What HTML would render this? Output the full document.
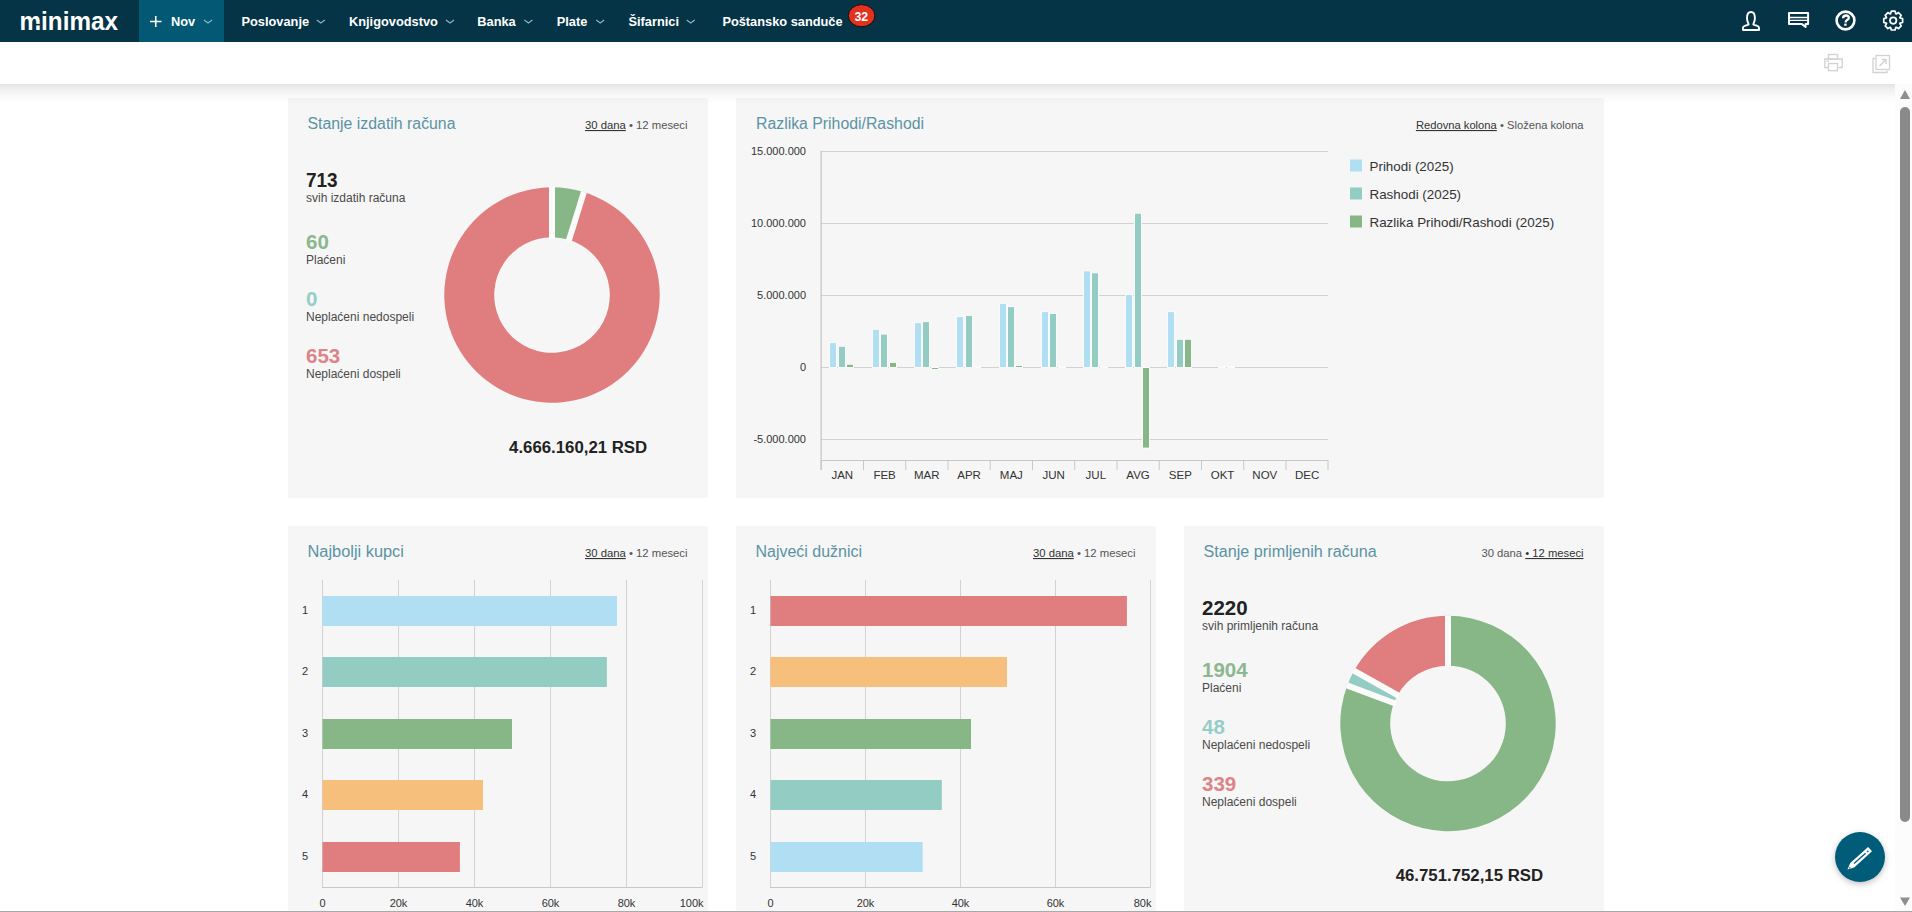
<!DOCTYPE html>
<html><head><meta charset="utf-8"><style>
html,body{margin:0;padding:0;width:1912px;height:912px;overflow:hidden;background:#fff;font-family:"Liberation Sans", sans-serif;}
.abs{position:absolute;}
svg text{font-family:"Liberation Sans", sans-serif;}
</style></head><body>

<div class="abs" style="left:0;top:0;width:1912px;height:42px;background:#053447"></div>
<div class="abs" style="left:139px;top:0;width:85px;height:42px;background:#035874"></div>
<div class="abs" style="left:0;top:42px;width:1912px;height:42px;background:#fff"></div>
<svg class="abs" style="left:0;top:0" width="1912" height="912" viewBox="0 0 1912 912">
<text x="19.5" y="30" font-size="25" fill="#ffffff" font-weight="bold" text-anchor="start" textLength="98.5" lengthAdjust="spacingAndGlyphs">minimax</text>
<rect x="34.5" y="23.9" width="5.5" height="1.5" fill="#053447"/>
<path d="M150 21.5 H161.5 M155.75 16 V27" stroke="#fff" stroke-width="1.6"/>
<text x="171" y="26" font-size="12.8" fill="#fff" font-weight="bold" text-anchor="start" >Nov</text>
<path d="M204 20 L208 23 L212 20" stroke="#8fb3c3" stroke-width="1.2" fill="none"/>
<text x="241.5" y="26" font-size="12.8" fill="#fff" font-weight="bold" text-anchor="start" >Poslovanje</text>
<path d="M316.8 20 L320.8 23 L324.8 20" stroke="#8fb3c3" stroke-width="1.2" fill="none"/>
<text x="349" y="26" font-size="12.8" fill="#fff" font-weight="bold" text-anchor="start" >Knjigovodstvo</text>
<path d="M446 20 L450 23 L454 20" stroke="#8fb3c3" stroke-width="1.2" fill="none"/>
<text x="477.3" y="26" font-size="12.8" fill="#fff" font-weight="bold" text-anchor="start" >Banka</text>
<path d="M524.4 20 L528.4 23 L532.4 20" stroke="#8fb3c3" stroke-width="1.2" fill="none"/>
<text x="556.7" y="26" font-size="12.8" fill="#fff" font-weight="bold" text-anchor="start" >Plate</text>
<path d="M596.2 20 L600.2 23 L604.2 20" stroke="#8fb3c3" stroke-width="1.2" fill="none"/>
<text x="628.5" y="26" font-size="12.8" fill="#fff" font-weight="bold" text-anchor="start" >Šifarnici</text>
<path d="M686.7 20 L690.7 23 L694.7 20" stroke="#8fb3c3" stroke-width="1.2" fill="none"/>
<text x="722.4" y="26" font-size="12.8" fill="#fff" font-weight="bold" text-anchor="start" >Poštansko sanduče</text>
<ellipse cx="861.6" cy="15.7" rx="13.3" ry="11.1" fill="#e0321f" stroke="#140c0c" stroke-width="1"/>
<text x="861.3" y="20.6" font-size="12.3" fill="#fff" font-weight="bold" text-anchor="middle" >32</text>
<path d="M1748.6 24.6 C1748.6 23.2 1747 21.6 1747 18.2 C1747 14.4 1748.6 12 1751 12 C1753.4 12 1754.9 14.4 1754.9 18.2 C1754.9 21.6 1753.3 23.2 1753.3 24.6 L1756.6 25.6 C1758.3 26.1 1759 26.9 1759 27.8 V30 H1743 V27.8 C1743 26.9 1743.7 26.1 1745.4 25.6 Z" fill="none" stroke="#fff" stroke-width="1.9" stroke-linejoin="round"/>
<path d="M1789 12.9 H1808.1 V23.9 H1805.6 L1805.6 27 L1801.6 23.9 H1789 Z" fill="none" stroke="#fff" stroke-width="2" stroke-linejoin="round"/>
<path d="M1789.5 17.5 H1807.5 M1789.5 20.4 H1807.5" stroke="#fff" stroke-width="1.4"/>
<circle cx="1845.5" cy="20.5" r="8.9" fill="none" stroke="#fff" stroke-width="2.6"/>
<path d="M1843.1 18.2 C1843.1 16.3 1844.3 15.5 1846 15.5 C1847.8 15.5 1848.8 16.5 1848.8 17.9 C1848.8 19.8 1845.6 19.9 1845.6 22.4" fill="none" stroke="#fff" stroke-width="2.3"/>
<rect x="1844.2" y="23.6" width="2.4" height="2.2" fill="#fff"/>
<path d="M1890.63 13.77 L1891.29 11.19 L1895.11 11.19 L1895.77 13.77 L1896.21 13.95 L1898.50 12.60 L1901.20 15.30 L1899.85 17.59 L1900.03 18.03 L1902.61 18.69 L1902.61 22.51 L1900.03 23.17 L1899.85 23.61 L1901.20 25.90 L1898.50 28.60 L1896.21 27.25 L1895.77 27.43 L1895.11 30.01 L1891.29 30.01 L1890.63 27.43 L1890.19 27.25 L1887.90 28.60 L1885.20 25.90 L1886.55 23.61 L1886.37 23.17 L1883.79 22.51 L1883.79 18.69 L1886.37 18.03 L1886.55 17.59 L1885.20 15.30 L1887.90 12.60 L1890.19 13.95 Z" fill="none" stroke="#fff" stroke-width="1.7" stroke-linejoin="round"/>
<circle cx="1893.2" cy="20.6" r="3.2" fill="none" stroke="#fff" stroke-width="1.8"/>
<g fill="none" stroke="#d2d2d2" stroke-width="1.3"><rect x="1828.5" y="54.5" width="9" height="4.5"/><path d="M1828.5 67.5 H1824.8 V59 H1842.2 V67.5 H1838.5"/><rect x="1828.5" y="63.5" width="9" height="7.2"/><path d="M1826.5 61.2 H1829"/></g>
<g fill="none" stroke="#d2d2d2" stroke-width="1.3"><path d="M1875 58.5 H1873 V72.5 H1887 V70.5"/><rect x="1876" y="55.5" width="13.5" height="14"/><path d="M1879.5 66 L1886 59.5 M1881.5 59.5 H1886 V64"/></g>
<rect x="288" y="98" width="420" height="400" fill="#f6f6f6"/>
<rect x="736" y="98" width="868" height="400" fill="#f6f6f6"/>
<rect x="288" y="526" width="420" height="400" fill="#f6f6f6"/>
<rect x="736" y="526" width="420" height="400" fill="#f6f6f6"/>
<rect x="1184" y="526" width="420" height="400" fill="#f6f6f6"/>
<text x="307.5" y="128.6" font-size="15.8" fill="#5a93a4" font-weight="normal" text-anchor="start" textLength="148" lengthAdjust="spacingAndGlyphs">Stanje izdatih računa</text>
<text x="585" y="129" font-size="11" fill="#333" font-weight="normal" text-anchor="start" textLength="102.5" lengthAdjust="spacingAndGlyphs"><tspan text-decoration="underline">30 dana</tspan> <tspan fill="#555">• 12 meseci</tspan></text>
<text x="306" y="186.8" font-size="20.5" fill="#222222" font-weight="bold" text-anchor="start" textLength="31.6" lengthAdjust="spacingAndGlyphs">713</text>
<text x="306" y="201.9" font-size="12" fill="#4a4a4a" font-weight="normal" text-anchor="start" >svih izdatih računa</text>
<text x="306" y="248.60000000000002" font-size="20.5" fill="#8cb790" font-weight="bold" text-anchor="start" >60</text>
<text x="306" y="263.7" font-size="12" fill="#4a4a4a" font-weight="normal" text-anchor="start" >Plaćeni</text>
<text x="306" y="305.5" font-size="20.5" fill="#96cdc6" font-weight="bold" text-anchor="start" >0</text>
<text x="306" y="320.59999999999997" font-size="12" fill="#4a4a4a" font-weight="normal" text-anchor="start" >Neplaćeni nedospeli</text>
<text x="306" y="362.7" font-size="20.5" fill="#dc8488" font-weight="bold" text-anchor="start" >653</text>
<text x="306" y="377.79999999999995" font-size="12" fill="#4a4a4a" font-weight="normal" text-anchor="start" >Neplaćeni dospeli</text>
<path d="M552.00 187.30 A107.7 107.7 0 0 1 583.85 192.12 L569.09 239.78 A57.8 57.8 0 0 0 552.00 237.20 Z" fill="#87b787"/>
<path d="M583.85 192.12 A107.7 107.7 0 1 1 552.00 187.30 L552.00 237.20 A57.8 57.8 0 1 0 569.09 239.78 Z" fill="#e07d7f"/>
<line x1="552.00" y1="239.20" x2="552.00" y2="187.00" stroke="#fbfbfb" stroke-width="6"/>
<line x1="568.50" y1="241.70" x2="583.94" y2="191.83" stroke="#fbfbfb" stroke-width="6"/>
<text x="647.2" y="453.2" font-size="16.8" fill="#222" font-weight="bold" text-anchor="end" >4.666.160,21 RSD</text>
<text x="1203.5" y="556.6" font-size="15.8" fill="#5a93a4" font-weight="normal" text-anchor="start" textLength="173.2" lengthAdjust="spacingAndGlyphs">Stanje primljenih računa</text>
<text x="1583.5" y="557" font-size="11" fill="#333" font-weight="normal" text-anchor="end" textLength="102" lengthAdjust="spacingAndGlyphs"><tspan fill="#555">30 dana </tspan><tspan text-decoration="underline">• 12 meseci</tspan></text>
<text x="1202" y="614.8" font-size="20.5" fill="#222222" font-weight="bold" text-anchor="start" >2220</text>
<text x="1202" y="629.9" font-size="12" fill="#4a4a4a" font-weight="normal" text-anchor="start" >svih primljenih računa</text>
<text x="1202" y="676.5999999999999" font-size="20.5" fill="#8cb790" font-weight="bold" text-anchor="start" >1904</text>
<text x="1202" y="691.6999999999999" font-size="12" fill="#4a4a4a" font-weight="normal" text-anchor="start" >Plaćeni</text>
<text x="1202" y="733.5" font-size="20.5" fill="#96cdc6" font-weight="bold" text-anchor="start" >48</text>
<text x="1202" y="748.6" font-size="12" fill="#4a4a4a" font-weight="normal" text-anchor="start" >Neplaćeni nedospeli</text>
<text x="1202" y="790.6999999999999" font-size="20.5" fill="#dc8488" font-weight="bold" text-anchor="start" >339</text>
<text x="1202" y="805.8" font-size="12" fill="#4a4a4a" font-weight="normal" text-anchor="start" >Neplaćeni dospeli</text>
<path d="M1448.00 615.80 A107.7 107.7 0 1 1 1347.25 685.43 L1393.93 703.07 A57.8 57.8 0 1 0 1448.00 665.70 Z" fill="#87b787"/>
<path d="M1347.25 685.43 A107.7 107.7 0 0 1 1354.08 670.79 L1397.59 695.21 A57.8 57.8 0 0 0 1393.93 703.07 Z" fill="#93ccc3"/>
<path d="M1354.08 670.79 A107.7 107.7 0 0 1 1448.00 615.80 L1448.00 665.70 A57.8 57.8 0 0 0 1397.59 695.21 Z" fill="#e07d7f"/>
<line x1="1448.00" y1="667.70" x2="1448.00" y2="615.50" stroke="#fbfbfb" stroke-width="6"/>
<line x1="1395.80" y1="703.78" x2="1346.97" y2="685.32" stroke="#fbfbfb" stroke-width="6"/>
<line x1="1399.34" y1="696.19" x2="1353.82" y2="670.65" stroke="#fbfbfb" stroke-width="6"/>
<text x="1543.1" y="880.8" font-size="16.8" fill="#222" font-weight="bold" text-anchor="end" >46.751.752,15 RSD</text>
<text x="756" y="128.6" font-size="15.8" fill="#5a93a4" font-weight="normal" text-anchor="start" textLength="168" lengthAdjust="spacingAndGlyphs">Razlika Prihodi/Rashodi</text>
<text x="1583.5" y="129" font-size="11" fill="#333" font-weight="normal" text-anchor="end" textLength="167.6" lengthAdjust="spacingAndGlyphs"><tspan text-decoration="underline">Redovna kolona</tspan> <tspan fill="#555">• Složena kolona</tspan></text>
<rect x="821" y="151.0" width="507" height="1" fill="#d2d2d2"/>
<text x="806" y="155.3" font-size="11" fill="#333" font-weight="normal" text-anchor="end" >15.000.000</text>
<rect x="821" y="223.0" width="507" height="1" fill="#d2d2d2"/>
<text x="806" y="227.3" font-size="11" fill="#333" font-weight="normal" text-anchor="end" >10.000.000</text>
<rect x="821" y="295.0" width="507" height="1" fill="#d2d2d2"/>
<text x="806" y="299.3" font-size="11" fill="#333" font-weight="normal" text-anchor="end" >5.000.000</text>
<rect x="821" y="367" width="507" height="1" fill="#d2d2d2"/>
<text x="806" y="371.3" font-size="11" fill="#333" font-weight="normal" text-anchor="end" >0</text>
<rect x="821" y="439.0" width="507" height="1" fill="#d2d2d2"/>
<text x="806" y="443.3" font-size="11" fill="#333" font-weight="normal" text-anchor="end" >-5.000.000</text>
<rect x="820.5" y="151" width="1.3" height="319" fill="#c8c8c8"/>
<rect x="821" y="460" width="507" height="1" fill="#c8c8c8"/>
<rect x="820.7" y="460" width="1" height="10" fill="#c8c8c8"/>
<text x="842.325" y="479.4" font-size="11.5" fill="#333" font-weight="normal" text-anchor="middle" >JAN</text>
<rect x="863.0" y="460" width="1" height="10" fill="#c8c8c8"/>
<text x="884.575" y="479.4" font-size="11.5" fill="#333" font-weight="normal" text-anchor="middle" >FEB</text>
<rect x="905.2" y="460" width="1" height="10" fill="#c8c8c8"/>
<text x="926.825" y="479.4" font-size="11.5" fill="#333" font-weight="normal" text-anchor="middle" >MAR</text>
<rect x="947.5" y="460" width="1" height="10" fill="#c8c8c8"/>
<text x="969.075" y="479.4" font-size="11.5" fill="#333" font-weight="normal" text-anchor="middle" >APR</text>
<rect x="989.7" y="460" width="1" height="10" fill="#c8c8c8"/>
<text x="1011.325" y="479.4" font-size="11.5" fill="#333" font-weight="normal" text-anchor="middle" >MAJ</text>
<rect x="1032.0" y="460" width="1" height="10" fill="#c8c8c8"/>
<text x="1053.575" y="479.4" font-size="11.5" fill="#333" font-weight="normal" text-anchor="middle" >JUN</text>
<rect x="1074.2" y="460" width="1" height="10" fill="#c8c8c8"/>
<text x="1095.825" y="479.4" font-size="11.5" fill="#333" font-weight="normal" text-anchor="middle" >JUL</text>
<rect x="1116.5" y="460" width="1" height="10" fill="#c8c8c8"/>
<text x="1138.075" y="479.4" font-size="11.5" fill="#333" font-weight="normal" text-anchor="middle" >AVG</text>
<rect x="1158.7" y="460" width="1" height="10" fill="#c8c8c8"/>
<text x="1180.325" y="479.4" font-size="11.5" fill="#333" font-weight="normal" text-anchor="middle" >SEP</text>
<rect x="1201.0" y="460" width="1" height="10" fill="#c8c8c8"/>
<text x="1222.575" y="479.4" font-size="11.5" fill="#333" font-weight="normal" text-anchor="middle" >OKT</text>
<rect x="1243.2" y="460" width="1" height="10" fill="#c8c8c8"/>
<text x="1264.825" y="479.4" font-size="11.5" fill="#333" font-weight="normal" text-anchor="middle" >NOV</text>
<rect x="1285.5" y="460" width="1" height="10" fill="#c8c8c8"/>
<text x="1307.075" y="479.4" font-size="11.5" fill="#333" font-weight="normal" text-anchor="middle" >DEC</text>
<rect x="1327.5" y="460" width="1" height="10" fill="#c8c8c8"/>
<rect x="829" y="342.1" width="8" height="25.9" fill="#fafafa"/>
<rect x="830" y="343.1" width="6" height="23.9" fill="#b0dff4"/>
<rect x="838" y="345.8" width="8" height="22.2" fill="#fafafa"/>
<rect x="839" y="346.8" width="6" height="20.2" fill="#93ccc3"/>
<rect x="846" y="363.8" width="8" height="4.2" fill="#fafafa"/>
<rect x="847" y="364.8" width="6" height="2.2" fill="#87b787"/>
<rect x="872" y="328.8" width="8" height="39.2" fill="#fafafa"/>
<rect x="873" y="329.8" width="6" height="37.2" fill="#b0dff4"/>
<rect x="880" y="333.6" width="8" height="34.4" fill="#fafafa"/>
<rect x="881" y="334.6" width="6" height="32.4" fill="#93ccc3"/>
<rect x="889" y="361.9" width="8" height="6.1" fill="#fafafa"/>
<rect x="890" y="362.9" width="6" height="4.1" fill="#87b787"/>
<rect x="914" y="322.1" width="8" height="45.9" fill="#fafafa"/>
<rect x="915" y="323.1" width="6" height="43.9" fill="#b0dff4"/>
<rect x="922" y="321.1" width="8" height="46.9" fill="#fafafa"/>
<rect x="923" y="322.1" width="6" height="44.9" fill="#93ccc3"/>
<rect x="931" y="367" width="8" height="3.0" fill="#fafafa"/>
<rect x="932" y="368" width="6" height="1.0" fill="#87b787"/>
<rect x="956" y="316.1" width="8" height="51.9" fill="#fafafa"/>
<rect x="957" y="317.1" width="6" height="49.9" fill="#b0dff4"/>
<rect x="965" y="314.9" width="8" height="53.1" fill="#fafafa"/>
<rect x="966" y="315.9" width="6" height="51.1" fill="#93ccc3"/>
<rect x="973" y="366" width="8" height="2" fill="#fafafa"/>
<rect x="999" y="302.9" width="8" height="65.1" fill="#fafafa"/>
<rect x="1000" y="303.9" width="6" height="63.1" fill="#b0dff4"/>
<rect x="1007" y="306.1" width="8" height="61.9" fill="#fafafa"/>
<rect x="1008" y="307.1" width="6" height="59.9" fill="#93ccc3"/>
<rect x="1015" y="365.0" width="8" height="3.0" fill="#fafafa"/>
<rect x="1016" y="366.0" width="6" height="1.0" fill="#87b787"/>
<rect x="1041" y="311.1" width="8" height="56.9" fill="#fafafa"/>
<rect x="1042" y="312.1" width="6" height="54.9" fill="#b0dff4"/>
<rect x="1049" y="313.0" width="8" height="55.0" fill="#fafafa"/>
<rect x="1050" y="314.0" width="6" height="53.0" fill="#93ccc3"/>
<rect x="1058" y="366" width="8" height="2" fill="#fafafa"/>
<rect x="1083" y="270.3" width="8" height="97.7" fill="#fafafa"/>
<rect x="1084" y="271.3" width="6" height="95.7" fill="#b0dff4"/>
<rect x="1091" y="272.3" width="8" height="95.7" fill="#fafafa"/>
<rect x="1092" y="273.3" width="6" height="93.7" fill="#93ccc3"/>
<rect x="1100" y="366" width="8" height="2" fill="#fafafa"/>
<rect x="1125" y="294.0" width="8" height="74.0" fill="#fafafa"/>
<rect x="1126" y="295.0" width="6" height="72.0" fill="#b0dff4"/>
<rect x="1134" y="212.7" width="8" height="155.3" fill="#fafafa"/>
<rect x="1135" y="213.7" width="6" height="153.3" fill="#93ccc3"/>
<rect x="1142" y="367" width="8" height="81.6" fill="#fafafa"/>
<rect x="1143" y="368" width="6" height="79.6" fill="#87b787"/>
<rect x="1167" y="311.1" width="8" height="56.9" fill="#fafafa"/>
<rect x="1168" y="312.1" width="6" height="54.9" fill="#b0dff4"/>
<rect x="1176" y="338.8" width="8" height="29.2" fill="#fafafa"/>
<rect x="1177" y="339.8" width="6" height="27.2" fill="#93ccc3"/>
<rect x="1184" y="338.8" width="8" height="29.2" fill="#fafafa"/>
<rect x="1185" y="339.8" width="6" height="27.2" fill="#87b787"/>
<rect x="1218" y="366" width="8" height="2" fill="#fafafa"/>
<rect x="1227" y="366" width="8" height="2" fill="#fafafa"/>
<rect x="1350" y="159.5" width="12" height="12" fill="#b0dff4"/>
<text x="1369.5" y="170.8" font-size="13.4" fill="#333" font-weight="normal" text-anchor="start" >Prihodi (2025)</text>
<rect x="1350" y="187.5" width="12" height="12" fill="#93ccc3"/>
<text x="1369.5" y="198.8" font-size="13.4" fill="#333" font-weight="normal" text-anchor="start" >Rashodi (2025)</text>
<rect x="1350" y="215.5" width="12" height="12" fill="#87b787"/>
<text x="1369.5" y="226.8" font-size="13.4" fill="#333" font-weight="normal" text-anchor="start" >Razlika Prihodi/Rashodi (2025)</text>
<text x="307.5" y="556.6" font-size="15.8" fill="#5a93a4" font-weight="normal" text-anchor="start" textLength="96.4" lengthAdjust="spacingAndGlyphs">Najbolji kupci</text>
<text x="585" y="557" font-size="11" fill="#333" font-weight="normal" text-anchor="start" textLength="102.5" lengthAdjust="spacingAndGlyphs"><tspan text-decoration="underline">30 dana</tspan> <tspan fill="#555">• 12 meseci</tspan></text>
<rect x="322.0" y="580" width="1" height="307.4" fill="#d2d2d2"/>
<text x="322.5" y="907" font-size="11" fill="#333" font-weight="normal" text-anchor="middle" >0</text>
<rect x="398.0" y="580" width="1" height="307.4" fill="#d2d2d2"/>
<text x="398.5" y="907" font-size="11" fill="#333" font-weight="normal" text-anchor="middle" >20k</text>
<rect x="474.0" y="580" width="1" height="307.4" fill="#d2d2d2"/>
<text x="474.5" y="907" font-size="11" fill="#333" font-weight="normal" text-anchor="middle" >40k</text>
<rect x="550.0" y="580" width="1" height="307.4" fill="#d2d2d2"/>
<text x="550.5" y="907" font-size="11" fill="#333" font-weight="normal" text-anchor="middle" >60k</text>
<rect x="626.0" y="580" width="1" height="307.4" fill="#d2d2d2"/>
<text x="626.5" y="907" font-size="11" fill="#333" font-weight="normal" text-anchor="middle" >80k</text>
<rect x="702.0" y="580" width="1" height="307.4" fill="#d2d2d2"/>
<text x="703.5" y="907" font-size="11" fill="#333" font-weight="normal" text-anchor="end" >100k</text>
<rect x="322.0" y="887" width="380.5" height="1" fill="#c8c8c8"/>
<rect x="322.5" y="596.0" width="294.5" height="30" fill="#b0dff4"/>
<text x="305" y="614.2" font-size="11" fill="#333" font-weight="normal" text-anchor="middle" >1</text>
<rect x="322.5" y="657.0" width="284.4" height="30" fill="#93ccc3"/>
<text x="305" y="675.2" font-size="11" fill="#333" font-weight="normal" text-anchor="middle" >2</text>
<rect x="322.5" y="719.0" width="189.5" height="30" fill="#87b787"/>
<text x="305" y="737.2" font-size="11" fill="#333" font-weight="normal" text-anchor="middle" >3</text>
<rect x="322.5" y="780.0" width="160.5" height="30" fill="#f6c07c"/>
<text x="305" y="798.2" font-size="11" fill="#333" font-weight="normal" text-anchor="middle" >4</text>
<rect x="322.5" y="842.0" width="137.4" height="30" fill="#e07d7f"/>
<text x="305" y="860.2" font-size="11" fill="#333" font-weight="normal" text-anchor="middle" >5</text>
<text x="755.5" y="556.6" font-size="15.8" fill="#5a93a4" font-weight="normal" text-anchor="start" textLength="106.6" lengthAdjust="spacingAndGlyphs">Najveći dužnici</text>
<text x="1033" y="557" font-size="11" fill="#333" font-weight="normal" text-anchor="start" textLength="102.5" lengthAdjust="spacingAndGlyphs"><tspan text-decoration="underline">30 dana</tspan> <tspan fill="#555">• 12 meseci</tspan></text>
<rect x="770.0" y="580" width="1" height="307.4" fill="#d2d2d2"/>
<text x="770.5" y="907" font-size="11" fill="#333" font-weight="normal" text-anchor="middle" >0</text>
<rect x="865.0" y="580" width="1" height="307.4" fill="#d2d2d2"/>
<text x="865.5" y="907" font-size="11" fill="#333" font-weight="normal" text-anchor="middle" >20k</text>
<rect x="960.0" y="580" width="1" height="307.4" fill="#d2d2d2"/>
<text x="960.5" y="907" font-size="11" fill="#333" font-weight="normal" text-anchor="middle" >40k</text>
<rect x="1055.0" y="580" width="1" height="307.4" fill="#d2d2d2"/>
<text x="1055.5" y="907" font-size="11" fill="#333" font-weight="normal" text-anchor="middle" >60k</text>
<rect x="1150.0" y="580" width="1" height="307.4" fill="#d2d2d2"/>
<text x="1151.5" y="907" font-size="11" fill="#333" font-weight="normal" text-anchor="end" >80k</text>
<rect x="770.0" y="887" width="380.5" height="1" fill="#c8c8c8"/>
<rect x="770.5" y="596.0" width="356.4" height="30" fill="#e07d7f"/>
<text x="753" y="614.2" font-size="11" fill="#333" font-weight="normal" text-anchor="middle" >1</text>
<rect x="770.5" y="657.0" width="236.5" height="30" fill="#f6c07c"/>
<text x="753" y="675.2" font-size="11" fill="#333" font-weight="normal" text-anchor="middle" >2</text>
<rect x="770.5" y="719.0" width="200.5" height="30" fill="#87b787"/>
<text x="753" y="737.2" font-size="11" fill="#333" font-weight="normal" text-anchor="middle" >3</text>
<rect x="770.5" y="780.0" width="171.3" height="30" fill="#93ccc3"/>
<text x="753" y="798.2" font-size="11" fill="#333" font-weight="normal" text-anchor="middle" >4</text>
<rect x="770.5" y="842.0" width="152.2" height="30" fill="#b0dff4"/>
<text x="753" y="860.2" font-size="11" fill="#333" font-weight="normal" text-anchor="middle" >5</text>
<defs><filter id="sh" x="-50%" y="-50%" width="200%" height="200%"><feDropShadow dx="0" dy="2" stdDeviation="3" flood-color="#000" flood-opacity="0.25"/></filter></defs>
<circle cx="1860" cy="857" r="25" fill="#065b78" filter="url(#sh)"/>
<g transform="translate(1847.4 869.6) rotate(-42)"><path d="M0 0 L6.5 -2.9 H30.5 V2.9 H6.5 Z" fill="#fff"/><rect x="9" y="-0.65" width="15.5" height="1.3" fill="#065b78"/><circle cx="27.3" cy="0" r="0.9" fill="#065b78"/><circle cx="3" cy="0.2" r="0.6" fill="#065b78"/></g>
<rect x="1895" y="84" width="17" height="828" fill="#fcfcfc"/>
<rect x="1900" y="107" width="10" height="715" rx="5" fill="#8a8a8a"/>
<path d="M1905 90 L1910 99 H1900 Z" fill="#8e8e8e"/>
<path d="M1905 906 L1910 897.5 H1900 Z" fill="#8e8e8e"/>
<rect x="0" y="911" width="1912" height="1" fill="#a9a9ad"/>
</svg>
<div class="abs" style="left:0;top:84px;width:1895px;height:20px;background:linear-gradient(rgba(0,0,0,0.11),rgba(0,0,0,0.055) 30%,rgba(0,0,0,0.02) 65%,rgba(0,0,0,0))"></div>
</body></html>
